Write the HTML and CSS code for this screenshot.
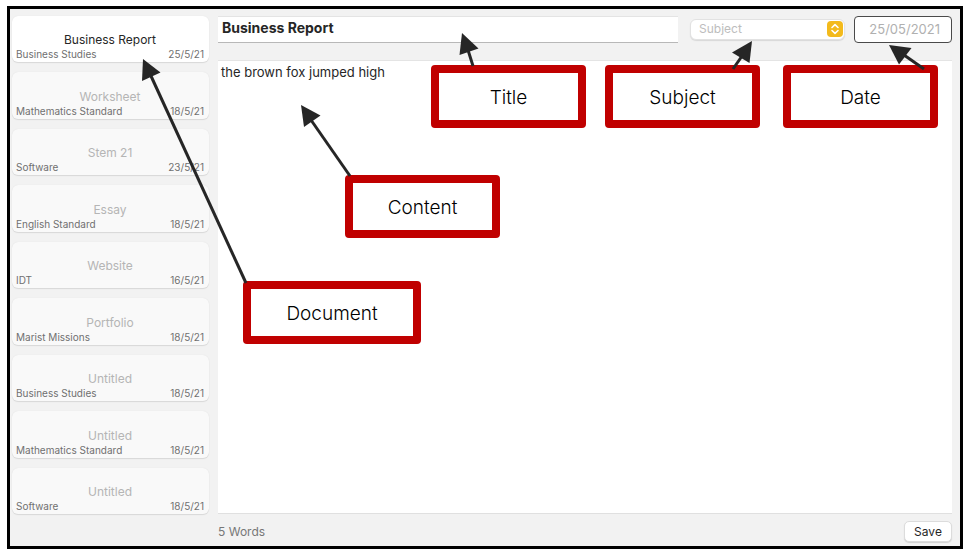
FILE: index.html
```html
<!DOCTYPE html>
<html lang="en">
<head>
<meta charset="utf-8">
<title>Document editor</title>
<link rel="stylesheet" href="styles.css">
</head>
<body>
<div class="window">
  <nav class="sidebar" aria-label="Documents">
    <button class="card card-active" type="button"><span class="card-title">Business Report</span><span class="card-meta"><span>Business Studies</span><span>25/5/21</span></span></button>
    <button class="card" type="button"><span class="card-title">Worksheet</span><span class="card-meta"><span>Mathematics Standard</span><span>18/5/21</span></span></button>
    <button class="card" type="button"><span class="card-title">Stem 21</span><span class="card-meta"><span>Software</span><span>23/5/21</span></span></button>
    <button class="card" type="button"><span class="card-title">Essay</span><span class="card-meta"><span>English Standard</span><span>18/5/21</span></span></button>
    <button class="card" type="button"><span class="card-title">Website</span><span class="card-meta"><span>IDT</span><span>16/5/21</span></span></button>
    <button class="card" type="button"><span class="card-title">Portfolio</span><span class="card-meta"><span>Marist Missions</span><span>18/5/21</span></span></button>
    <button class="card" type="button"><span class="card-title">Untitled</span><span class="card-meta"><span>Business Studies</span><span>18/5/21</span></span></button>
    <button class="card" type="button"><span class="card-title">Untitled</span><span class="card-meta"><span>Mathematics Standard</span><span>18/5/21</span></span></button>
    <button class="card" type="button"><span class="card-title">Untitled</span><span class="card-meta"><span>Software</span><span>18/5/21</span></span></button>
  </nav>
  <main class="editor">
    <div class="toolbar">
      <input class="title-input" type="text" value="Business Report" aria-label="Title">
      <div class="subject">
        <select class="subject-select" aria-label="Subject"><option>Subject</option></select>
        <svg class="subject-icon" viewBox="0 0 16 16" aria-hidden="true"><rect width="16" height="16" rx="4" fill="#f3ba1c"/><path d="M5 6.500 8 3.700 11 6.500M5 9.500 8 12.300 11 9.500" fill="none" stroke="#fff" stroke-width="1.600" stroke-linecap="round" stroke-linejoin="round"/></svg>
      </div>
      <input class="date-input" type="text" value="25/05/2021" aria-label="Date">
    </div>
    <textarea class="content" aria-label="Content">the brown fox jumped high</textarea>
    <footer class="status">
      <span>5 Words</span>
      <button class="save" type="button">Save</button>
    </footer>
  </main>
</div>
<div class="callout callout-title">Title</div>
<div class="callout callout-subject">Subject</div>
<div class="callout callout-date">Date</div>
<div class="callout callout-content">Content</div>
<div class="callout callout-document">Document</div>
<svg class="arrows" width="970" height="558" viewBox="0 0 970 558" aria-hidden="true">
  <g stroke="#262626" stroke-width="3">
    <path d="M473 66 468 50"/>
    <path d="M733 69 742 56"/>
    <path d="M924 69 904 55"/>
    <path d="M350 176 311 120"/>
    <path d="M246 283 151 76"/>
  </g>
  <g fill="#262626">
    <path d="M462 33 478.500 48.500 459.500 55Z"/>
    <path d="M752 41 732 52.500 749.500 63Z"/>
    <path d="M889 45 911.500 48 899 64.500Z"/>
    <path d="M301 105 320.500 115.500 304 127Z"/>
    <path d="M143 59 160.500 72.500 142 81Z"/>
  </g>
</svg>
</body>
</html>
```
FILE: styles.css
```css
* {
  box-sizing: border-box;
}

body {
  position: relative;
  display: flex;
  min-height: 100vh;
  margin: 0;
  padding: 6px 7px 9px;
  background: #fff;
  font-family: Inter, "Liberation Sans", sans-serif;
  font-size: 13px;
  color: #262626;
}

button,
input,
select,
textarea {
  margin: 0;
  font: inherit;
  color: inherit;
}

.window {
  flex: 1;
  display: flex;
  gap: 9px;
  min-width: 0;
  padding: 7px 8px 4px 2px;
  border: 3px solid #000;
  background: #f2f2f2;
}

.sidebar {
  flex: 0 0 197px;
  display: grid;
  grid-auto-rows: 1fr;
  gap: 10px;
  margin-bottom: 28px;
}

.card {
  display: flex;
  flex-direction: column;
  justify-content: flex-end;
  padding: 0 5px 1px 4px;
  border: 0;
  border-radius: 6px;
  background: #f9f9f9;
  box-shadow: 0 1px 1px #d8d8d8, 0 0 1px #dcdcdc;
  color: #b5b5b5;
}

.card-active {
  background: #fff;
  color: #262626;
}

.card-title {
  font-size: 12px;
  line-height: 16px;
  text-align: center;
}

.card-meta {
  display: flex;
  justify-content: space-between;
  font-size: 10px;
  line-height: 13px;
  color: #707070;
}

.editor {
  flex: 1;
  display: flex;
  flex-direction: column;
  min-width: 0;
}

.toolbar {
  display: flex;
  align-items: center;
  margin-bottom: 17px;
}

.title-input {
  flex: 1;
  min-width: 0;
  height: 27px;
  padding: 0 4px 4px;
  border: 0;
  border-top: 1px solid #e4e4e4;
  border-bottom: 1px solid #b8b8b8;
  background: #fff;
  font-size: 14px;
  font-weight: 700;
}

.subject {
  position: relative;
  width: 155px;
  margin: 0 9px 0 12px;
}

.subject-select {
  display: block;
  width: 100%;
  height: 21px;
  padding: 0 28px 2px 8px;
  border: 1px solid #e2e2e2;
  border-radius: 6px;
  background: #fff;
  box-shadow: 0 1px 1px #d8d8d8;
  appearance: none;
  font-size: 12px;
  color: #bdbdbd;
}

.subject-icon {
  position: absolute;
  top: 2px;
  right: 2px;
  width: 16px;
  height: 16px;
  pointer-events: none;
}

.date-input {
  width: 98px;
  height: 27px;
  padding: 0 11px 1px 0;
  border: 1px solid #4a4a4a;
  border-radius: 4px;
  background: #fff;
  font-size: 13px;
  text-align: right;
  color: #b0b0b0;
}

.content {
  flex: 1;
  display: block;
  width: 100%;
  padding: 3px;
  border: 0;
  border-top: 1px solid #e4e4e4;
  border-bottom: 1px solid #e0e0e0;
  background: #fff;
  line-height: 16px;
  resize: none;
}

.status {
  display: flex;
  align-items: center;
  justify-content: space-between;
  padding-top: 7px;
  font-size: 12px;
  color: #777;
}

.save {
  width: 48px;
  height: 21px;
  padding: 0;
  border: 1px solid #dcdcdc;
  border-radius: 5px;
  background: #fff;
  box-shadow: 0 1px 1px #d0d0d0;
  color: #262626;
}

.callout {
  position: absolute;
  display: flex;
  align-items: center;
  justify-content: center;
  width: 155px;
  height: 63px;
  padding-top: 1px;
  border: 8px solid #c00000;
  border-radius: 4px;
  background: #fff;
  font-family: "Century Gothic", Inter, sans-serif;
  font-size: 19px;
  font-weight: 300;
  color: #000;
}

.callout-title {
  top: 65px;
  left: 431px;
}

.callout-subject {
  top: 65px;
  left: 605px;
}

.callout-date {
  top: 65px;
  left: 783px;
}

.callout-content {
  top: 175px;
  left: 345px;
}

.callout-document {
  top: 281px;
  left: 243px;
  width: 178px;
}

.arrows {
  position: absolute;
  top: 0;
  left: 0;
  pointer-events: none;
}
```
